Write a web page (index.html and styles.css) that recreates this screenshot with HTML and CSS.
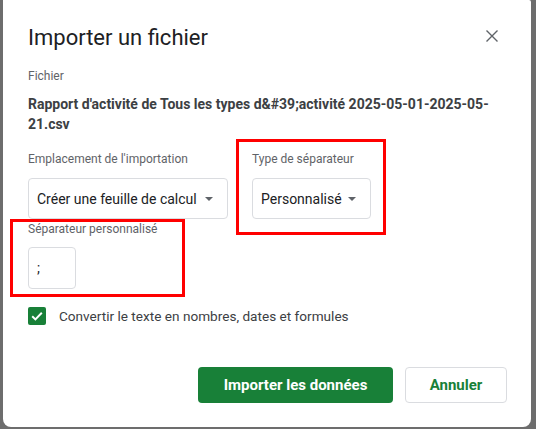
FILE: index.html
```html
<!DOCTYPE html>
<html>
<head>
    <title>Importer un fichier</title>
    <link rel="stylesheet" href="styles.css">
</head>
<body>
    <div class="dialog">
        <div class="header">
            <h1>Importer un fichier</h1>
            <svg class="close" width="24" height="24" viewBox="0 0 24 24">
                <path d="M6.5 6.5 L17.5 17.5 M17.5 6.5 L6.5 17.5" stroke="#5f6368" stroke-width="1.4" fill="none"/>
            </svg>
        </div>

        <div class="label file-label">Fichier</div>
        <div class="filename">Rapport d'activité de Tous les types d&amp;#39;activité 2025-05-01-2025-05-21.csv</div>

        <div class="fields">
            <div class="field">
                <div class="label">Emplacement de l'importation</div>
                <div class="select select-wide">
                    <span>Créer une feuille de calcul</span>
                    <span class="arrow"></span>
                </div>
            </div>
            <div class="field">
                <div class="label">Type de séparateur</div>
                <div class="select select-narrow">
                    <span>Personnalisé</span>
                    <span class="arrow"></span>
                </div>
            </div>
        </div>

        <div class="field custom">
            <div class="label">Séparateur personnalisé</div>
            <div class="text-input">;</div>
        </div>

        <label class="check-row">
            <svg width="18" height="18" viewBox="0 0 18 18">
                <rect width="18" height="18" rx="2" fill="#188038"/>
                <path d="M4.2 9.3 L7.4 12.4 L13.8 5.8" stroke="#fff" stroke-width="2" fill="none"/>
            </svg>
            <span>Convertir le texte en nombres, dates et formules</span>
        </label>

        <div class="footer">
            <button class="primary">Importer les données</button>
            <button class="secondary">Annuler</button>
        </div>

        <div class="mark mark-type"></div>
        <div class="mark mark-custom"></div>
    </div>
</body>
</html>
```

FILE: styles.css
```css
body {
    margin: 0;
    height: 429px;
    overflow: hidden;
    background: #6d6d6d;
    font-family: Roboto, "Liberation Sans", sans-serif;
    color: #3c4043;
}

.dialog {
    position: relative;
    box-sizing: border-box;
    width: 528px;
    height: 427px;
    margin-left: 3px;
    padding: 24px 24px 0 25px;
    background: #fff;
    border-radius: 0 2px 8px 8px;
}

.header {
    display: flex;
    justify-content: space-between;
    align-items: flex-start;
}
h1 {
    margin: 0;
    font-size: 22px;
    line-height: 28px;
    font-weight: 400;
    color: #202124;
}
.close { margin-right: 3px; }

.label {
    font-size: 12px;
    line-height: 16px;
    color: #5f6368;
}
.file-label { margin-top: 16px; }

.filename {
    margin-top: 10px;
    font-size: 14px;
    line-height: 20px;
    font-weight: 700;
    color: #3c4043;
}

.fields {
    display: flex;
    gap: 24px;
    margin-top: 17px;
}
.field .label { margin-bottom: 11px; }

.select {
    box-sizing: border-box;
    height: 41px;
    display: flex;
    align-items: center;
    justify-content: space-between;
    padding: 0 14px 0 8px;
    border: 1px solid #dadce0;
    border-radius: 4px;
    font-size: 14px;
    white-space: nowrap;
    color: #202124;
}
.select-wide { width: 200px; }
.select-narrow { width: 119px; }
.arrow {
    width: 0;
    height: 0;
    border-left: 4px solid transparent;
    border-right: 4px solid transparent;
    border-top: 4px solid #5f6368;
}

.custom { margin-top: 2px; }
.custom .label { margin-bottom: 10px; }
.text-input {
    box-sizing: border-box;
    width: 48px;
    height: 42px;
    padding-left: 8px;
    border: 1px solid #dadce0;
    border-radius: 4px;
    font-size: 14px;
    line-height: 40px;
    color: #202124;
}

.check-row {
    display: flex;
    align-items: center;
    gap: 13px;
    margin-top: 17px;
    height: 20px;
    font-size: 13.6px;
    color: #3c4043;
}

.footer {
    display: flex;
    justify-content: flex-end;
    gap: 12px;
    margin-top: 41px;
}
button {
    height: 36px;
    border-radius: 4px;
    font-family: Roboto, "Liberation Sans", sans-serif;
    font-size: 15px;
    font-weight: 700;
    cursor: pointer;
}
.primary {
    width: 195px;
    border: none;
    background: #188038;
    color: #fff;
}
.secondary {
    width: 102px;
    border: 1px solid #dadce0;
    background: #fff;
    color: #188038;
}

.mark {
    position: absolute;
    box-sizing: border-box;
    border: 3px solid #f00;
}
.mark-type {
    left: 233px;
    top: 139px;
    width: 150px;
    height: 96px;
}
.mark-custom {
    left: 7px;
    top: 219px;
    width: 175px;
    height: 78px;
}
```
